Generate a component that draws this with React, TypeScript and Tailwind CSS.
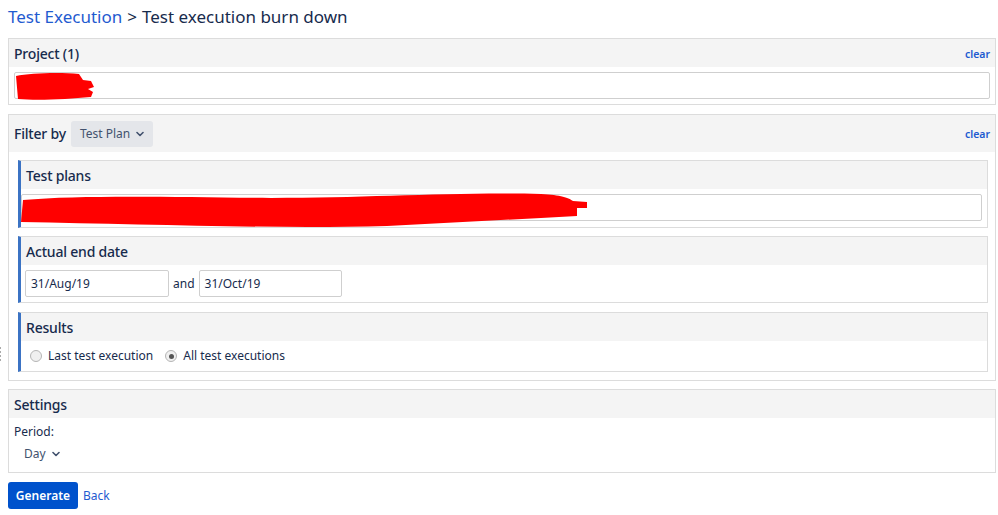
import React from "react";

const font = { fontFamily: '"Segoe UI", "Noto Sans", "Open Sans", sans-serif' };

function Chevron({ className = "" }: { className?: string }) {
  return (
    <svg width="8" height="6" viewBox="0 0 8 6" className={className}>
      <path d="M1 1.5 L4 4.5 L7 1.5" fill="none" stroke="currentColor" strokeWidth="1.6" strokeLinecap="round" strokeLinejoin="round" />
    </svg>
  );
}

function Radio({ checked }: { checked?: boolean }) {
  return (
    <span className="w-[12px] h-[12px] rounded-full border border-[#b5b5b5] bg-[#f0f0f0] flex items-center justify-center">
      {checked && <span className="w-[5px] h-[5px] rounded-full bg-[#555]" />}
    </span>
  );
}

const head = "text-[14px] font-medium tracking-[-0.2px]";

function SubPanel({ title, children, className = "" }: { title: string; children: React.ReactNode; className?: string }) {
  return (
    <div className={"border border-[#dcdcdc] border-l-[3px] border-l-[#3b73c4] bg-white " + className}>
      <div className={"h-[28px] bg-[#f4f4f4] flex items-center pl-[5px] text-[#172b4d] " + head}>{title}</div>
      {children}
    </div>
  );
}

export default function App() {
  return (
    <div className="bg-white w-[998px] h-[515px] px-[8px] pt-[4px] relative text-[#172b4d]" style={font}>
      <div className="absolute left-0 top-[347px] flex flex-col gap-[2px]">
        <span className="w-[1px] h-[2px] bg-[#aaa]" />
        <span className="w-[1px] h-[2px] bg-[#aaa]" />
        <span className="w-[1px] h-[2px] bg-[#aaa]" />
        <span className="w-[1px] h-[2px] bg-[#aaa]" />
      </div>
      <div className="h-[24px] flex items-center text-[17px] leading-none">
        <span className="text-[#1f5bd0]">Test Execution</span>
        <span className="mx-[5px]">&gt;</span>
        <span>Test execution burn down</span>
      </div>

      {/* Project */}
      <div className="mt-[10px] w-[988px] border border-[#dcdcdc]">
        <div className="h-[28px] bg-[#f4f4f4] flex items-center justify-between pl-[5px] pr-[5px]">
          <span className={head}>Project (1)</span>
          <span className="text-[10.5px] font-semibold text-[#1f5bd0] pt-[3px]">clear</span>
        </div>
        <div className="px-[5px] pt-[5px] pb-[5px]">
          <div className="relative h-[27px] border border-[#cfcfcf] rounded-[2px] bg-white">
            <svg className="absolute left-[0px] top-[-1px]" width="82" height="30" viewBox="0 0 82 30">
              <path d="M1 4 C15 1 45 0 64 2 L68 8 L76 9 L79 15 L73 17 L78 20 L76 25 L50 27 C30 28 15 28 3 27 Z" fill="#ff0000" />
            </svg>
          </div>
        </div>
      </div>

      {/* Filter */}
      <div className="mt-[9px] w-[988px] border border-[#dcdcdc]">
        <div className="h-[37px] bg-[#f4f4f4] flex items-center justify-between pl-[5px] pr-[5px]">
          <div className="flex items-center">
            <span className={head}>Filter by</span>
            <span className="ml-[5px] h-[26px] px-[9px] rounded-[3px] bg-[#e4e6ea] flex items-center gap-[6px] text-[12px] text-[#42526e]">
              Test Plan <Chevron />
            </span>
          </div>
          <span className="text-[10.5px] font-semibold text-[#1f5bd0] pt-[3px]">clear</span>
        </div>
        <div className="pl-[9px] pr-[7px] pt-[8px] pb-[8px] flex flex-col">
          <SubPanel title="Test plans">
            <div className="pl-[0px] pr-[5px] pt-[5px] pb-[6px]">
              <div className="relative h-[27px] border border-[#cfcfcf] rounded-[2px] bg-white">
                <svg className="absolute left-[-1px] top-[-3px]" width="572" height="40" viewBox="0 0 572 40">
                  <path d="M2 8 C60 3 150 5 250 6 C350 6 430 0 520 2 C540 3 548 6 552 9 L566 10 L566 16 L556 16 L556 24 L520 26 L366 34 C250 37 120 32 0 30 Z" fill="#ff0000" />
                </svg>
              </div>
            </div>
          </SubPanel>
          <SubPanel title="Actual end date" className="mt-[8px]">
            <div className="flex items-center pl-[4px] pt-[5px] pb-[5px] text-[12px]">
              <div className="w-[144px] h-[27px] border border-[#cfcfcf] rounded-[2px] flex items-center px-[5px]">31/Aug/19</div>
              <span className="mx-[4px]">and</span>
              <div className="w-[143px] h-[27px] border border-[#cfcfcf] rounded-[2px] flex items-center px-[5px]">31/Oct/19</div>
            </div>
          </SubPanel>
          <SubPanel title="Results" className="mt-[9px]">
            <div className="h-[30px] flex items-center pl-[9px] text-[12px]">
              <Radio />
              <span className="ml-[6px]">Last test execution</span>
              <span className="ml-[12px]"><Radio checked /></span>
              <span className="ml-[6px]">All test executions</span>
            </div>
          </SubPanel>
        </div>
      </div>

      {/* Settings */}
      <div className="mt-[8px] w-[988px] border border-[#dcdcdc]">
        <div className="h-[28px] bg-[#f4f4f4] flex items-center pl-[5px]">
          <span className={head}>Settings</span>
        </div>
        <div className="pl-[5px] pt-[6px] pb-[8px] text-[12px]">
          <div className="h-[16px] leading-[16px]">Period:</div>
          <div className="mt-[4px] h-[20px] pl-[10px] flex items-center gap-[6px] text-[12px] text-[#42526e]">
            Day <Chevron />
          </div>
        </div>
      </div>

      <div className="mt-[9px] flex items-center">
        <span className="w-[70px] h-[27px] bg-[#0052cc] rounded-[3px] text-white text-[12px] font-semibold flex items-center justify-center">Generate</span>
        <span className="ml-[5px] text-[12px] text-[#1f5bd0]">Back</span>
      </div>
    </div>
  );
}
